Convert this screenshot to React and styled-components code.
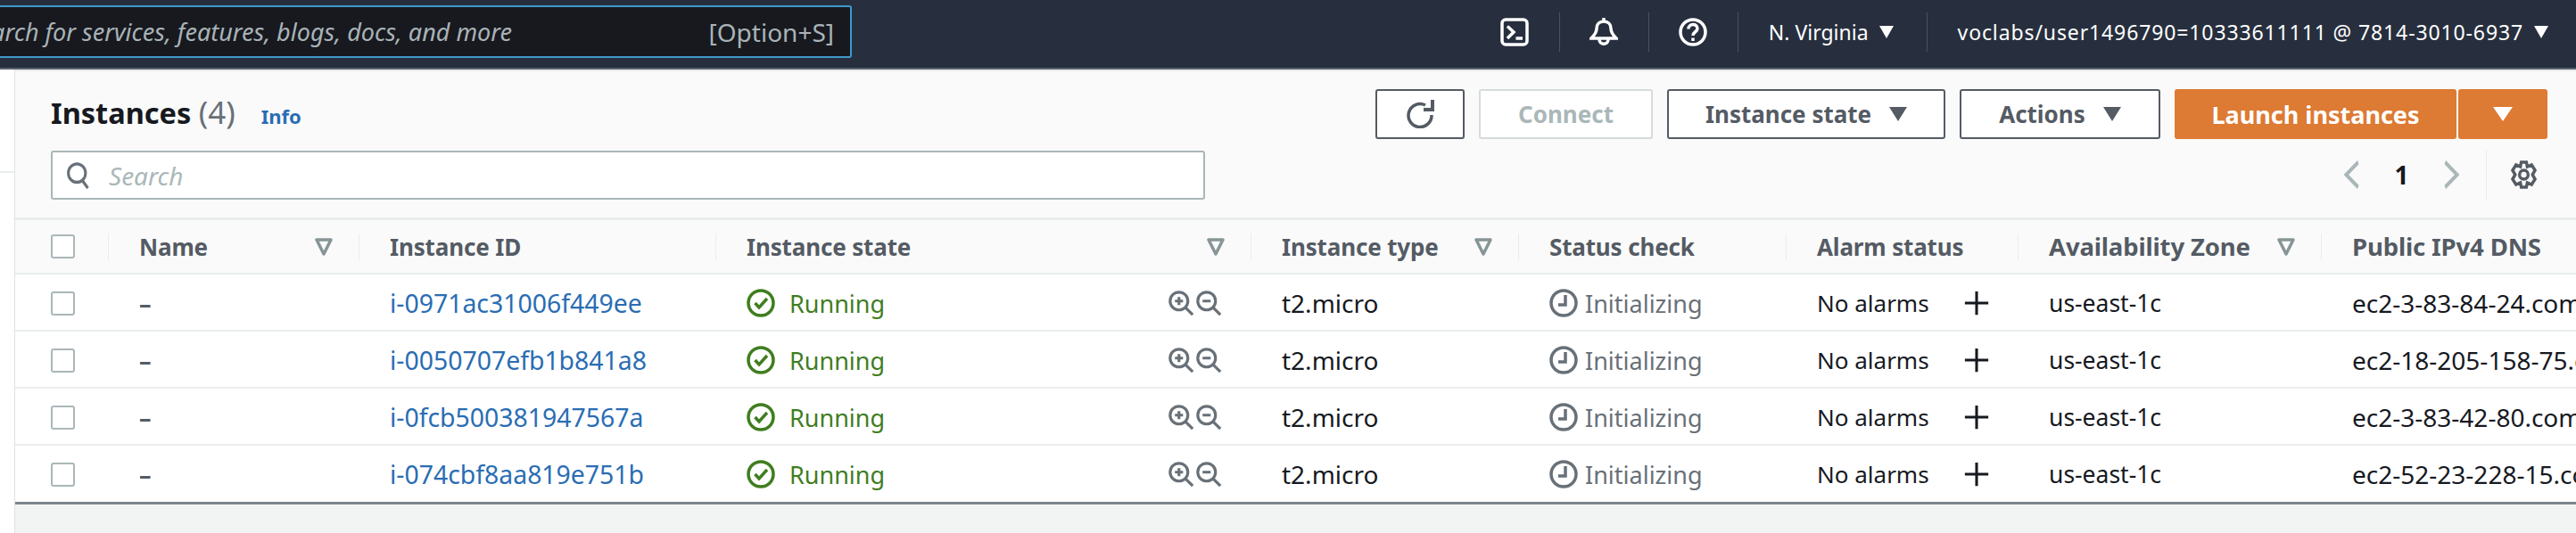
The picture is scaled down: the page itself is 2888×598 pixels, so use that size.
import React from "react";
import styled, { createGlobalStyle } from "styled-components";

const GlobalStyle = createGlobalStyle`
  html, body {
    margin: 0;
    padding: 0;
    background: #f2f3f3;
  }
  body {
    font-family: "Noto Sans", "Open Sans", sans-serif;
    overflow: hidden;
  }
`;

const Page = styled.div`
  width: 2888px;
  height: 598px;
  overflow: hidden;
  display: flex;
  flex-direction: column;
`;

const NavBar = styled.header`
  height: 76px;
  flex: none;
  box-sizing: content-box;
  background: #272f3e;
  border-bottom: 2px solid #5b626d;
  display: flex;
  align-items: center;
  color: #fff;
`;

const NavSearch = styled.div`
  width: 994px;
  height: 59px;
  margin-left: -39px;
  margin-top: -5px;
  box-sizing: border-box;
  border: 2px solid #3f9ac9;
  border-radius: 3px;
  background: #17191f;
  color: #a9b3b7;
  display: flex;
  align-items: center;
  justify-content: space-between;
  padding: 0 18px 0 0;
  overflow: hidden;
  white-space: nowrap;
`;

const NavHint = styled.span`
  font-size: 28px;
`;

const NavHintText = styled.em`
  font-size: 27px;
  font-style: italic;
`;

const NavRight = styled.div`
  margin-left: auto;
  display: flex;
  align-items: center;
  height: 44px;
  margin-top: -4px;
  padding-right: 31px;
`;

const NavIcon = styled.div`
  width: 100px;
  height: 44px;
  box-sizing: border-box;
  border-right: 1px solid #4a5361;
  display: flex;
  align-items: center;
  justify-content: center;
`;

const NavMenu = styled.div`
  height: 44px;
  box-sizing: border-box;
  display: flex;
  align-items: center;
  gap: 12px;
  font-size: 23px;
  letter-spacing: ${(p) => p.$track || 0}px;
  padding: 0 ${(p) => p.$right}px 0 ${(p) => p.$left}px;
  border-right: ${(p) => (p.$last ? "none" : "1px solid #4a5361")};
  white-space: nowrap;
`;

const Caret = styled.span`
  display: inline-block;
  width: 0;
  height: 0;
  border-left: ${(p) => p.$w}px solid transparent;
  border-right: ${(p) => p.$w}px solid transparent;
  border-top: ${(p) => p.$h}px solid ${(p) => p.$color || "#fff"};
`;

const Body = styled.div`
  flex: 1;
  display: flex;
  min-height: 0;
`;

const SideStrip = styled.aside`
  width: 16px;
  flex: none;
  background: #fff;
  border-right: 1px solid #dfe2e4;
`;

const SideRule = styled.div`
  height: 2px;
  margin-top: 114px;
  background: #eaeded;
`;

const Main = styled.main`
  flex: 1;
  min-width: 0;
  display: flex;
  flex-direction: column;
`;

const Toolbar = styled.section`
  height: 169px;
  flex: none;
  box-sizing: border-box;
  background: #fafafa;
  border-top: 2px solid #eaeded;
  border-bottom: 3px solid #eaeded;
  padding: 20px 32px 0 40px;
`;

const TitleRow = styled.div`
  display: flex;
  align-items: flex-start;
  justify-content: space-between;
  height: 69px;
`;

const Heading = styled.div`
  display: flex;
  align-items: baseline;
  gap: 29px;
  padding-top: 2px;
`;

const Title = styled.h1`
  margin: 0;
  font-size: 32.5px;
  font-weight: 700;
  color: #16191f;
`;

const Count = styled.span`
  font-size: 35px;
  font-weight: 400;
  color: #687078;
`;

const InfoLink = styled.a`
  font-size: 22px;
  font-weight: 700;
  color: #2a6db3;
`;

const Buttons = styled.div`
  display: flex;
  gap: 16px;
`;

const Button = styled.button`
  height: 56px;
  width: ${(p) => p.$w}px;
  box-sizing: border-box;
  border: 2px solid ${(p) => (p.$disabled ? "#d5dbdb" : "#545b64")};
  border-radius: 3px;
  background: #fff;
  color: ${(p) => (p.$disabled ? "#aab7b8" : "#545b64")};
  font: 700 26px "Noto Sans", sans-serif;
  display: flex;
  align-items: center;
  justify-content: center;
  gap: 20px;
  padding: 0;
`;

const SplitButton = styled.div`
  display: flex;
  gap: 2px;
`;

const PrimaryButton = styled(Button)`
  border: none;
  background: #dd7a33;
  color: #fff;
  font-size: 27px;
`;

const SearchRow = styled.div`
  display: flex;
  align-items: flex-start;
  justify-content: space-between;
`;

const SearchBox = styled.div`
  width: 1294px;
  height: 55px;
  box-sizing: border-box;
  border: 2px solid #aab7b8;
  border-radius: 3px;
  background: #fff;
  display: flex;
  align-items: center;
  gap: 20px;
  padding-left: 15px;
  color: #aab7b8;
  font-size: 28px;
  font-style: italic;
`;

const Pager = styled.div`
  display: flex;
  align-items: center;
  height: 56px;
  margin-top: -1px;
  padding-right: 11px;
`;

const PageNumber = styled.span`
  width: 93px;
  text-align: center;
  font-size: 28px;
  font-weight: 700;
  color: #16191f;
`;

const PagerRule = styled.div`
  width: 1px;
  height: 56px;
  background: #eaeded;
  margin: 0 26px 0 30px;
`;

const COLUMNS = "105px 281px 400px 600px 300px 300px 260px 340px 300px";

const HeaderRow = styled.div`
  display: grid;
  grid-template-columns: ${COLUMNS};
  height: 61px;
  flex: none;
  box-sizing: border-box;
  background: #fafafa;
  border-bottom: 2px solid #eaeded;
  align-items: center;
`;

const HeadCell = styled.div`
  height: 30px;
  box-sizing: border-box;
  border-right: 1px solid #eaeded;
  display: flex;
  align-items: center;
  justify-content: space-between;
  padding: 0 29px 0 34px;
  font-size: ${(p) => p.$size || 26}px;
  font-weight: 700;
  letter-spacing: -0.15px;
  color: #545b64;
  white-space: nowrap;
`;

const CheckHead = styled(HeadCell)`
  padding-left: 40px;
`;

const Row = styled.div`
  display: grid;
  grid-template-columns: ${COLUMNS};
  height: ${(p) => (p.$last ? 66 : 64)}px;
  flex: none;
  box-sizing: border-box;
  background: #fff;
  border-bottom: ${(p) => (p.$last ? "3px solid #7d868c" : "2px solid #eaeded")};
  align-items: ${(p) => (p.$last ? "start" : "center")};
  font-size: 27px;
  color: #16191f;
`;

const Cell = styled.div`
  height: 62px;
  box-sizing: border-box;
  display: flex;
  align-items: center;
  justify-content: ${(p) => (p.$spread ? "space-between" : "flex-start")};
  gap: ${(p) => p.$gap || 0}px;
  padding: 2px 33px 0 ${(p) => (p.$check ? 40 : 34)}px;
  font-size: ${(p) => (p.$size ? `${p.$size}px` : "inherit")};
  white-space: nowrap;
  overflow: hidden;
  min-width: 0;
`;

const Check = styled.span`
  display: block;
  width: 27px;
  height: 27px;
  box-sizing: border-box;
  border: 2px solid #aab7b8;
  border-radius: 3px;
  background: #fff;
`;

const Dash = styled.span`
  color: #545b64;
  font-weight: 700;
`;

const Link = styled.a`
  color: #2a6db3;
  font-size: 28.4px;
`;

const Running = styled.span`
  color: #3f7d1f;
`;

const Pending = styled.span`
  color: #687078;
`;

const Group = styled.span`
  display: flex;
  align-items: center;
  gap: ${(p) => p.$gap}px;
`;

const Footer = styled.div`
  flex: 1;
  background: #f2f3f3;
`;

const Icon = ({ size = 32, w, h, color = "currentColor", sw = 3.5, children }) => (
  <svg
    width={w || size}
    height={h || size}
    viewBox="0 0 32 32"
    fill="none"
    stroke={color}
    strokeWidth={sw}
    preserveAspectRatio="none"
    style={{ display: "block", flex: "none" }}
  >
    {children}
  </svg>
);

const FilterIcon = () => (
  <svg width="20" height="22" viewBox="0 0 20 22" style={{ display: "block", flex: "none" }}>
    <path d="M2 3 H18 L10 19 Z" fill="none" stroke="#879596" strokeWidth="3.5" strokeLinejoin="round" />
  </svg>
);

const CheckCircle = () => (
  <Icon color="#3f7d1f">
    <circle cx="16" cy="16" r="14" />
    <path d="M9.5 16 L14 21 L23 11" />
  </Icon>
);

const Clock = () => (
  <Icon color="#687078">
    <circle cx="16" cy="16" r="14" />
    <path d="M18 7 V18 H10" />
  </Icon>
);

const ZoomIn = () => (
  <Icon size={29} color="#687078">
    <circle cx="13" cy="13" r="11" />
    <path d="M21 21 L30 30 M13 8 V18 M8 13 H18" />
  </Icon>
);

const ZoomOut = () => (
  <Icon size={29} color="#687078">
    <circle cx="13" cy="13" r="11" />
    <path d="M21 21 L30 30 M8 13 H18" />
  </Icon>
);

const Plus = () => (
  <Icon size={28} color="#16191f">
    <path d="M16 1 V31 M1 16 H31" />
  </Icon>
);

const rows = [
  { id: "i-0971ac31006f449ee", dns: "ec2-3-83-84-24.compute-1.amazonaws.com" },
  { id: "i-0050707efb1b841a8", dns: "ec2-18-205-158-75.compute-1.amazonaws.com" },
  { id: "i-0fcb500381947567a", dns: "ec2-3-83-42-80.compute-1.amazonaws.com" },
  { id: "i-074cbf8aa819e751b", dns: "ec2-52-23-228-15.compute-1.amazonaws.com" },
];

const headers = [
  { label: "Name", filter: true },
  { label: "Instance ID" },
  { label: "Instance state", filter: true },
  { label: "Instance type", filter: true },
  { label: "Status check" },
  { label: "Alarm status" },
  { label: "Availability Zone", filter: true, size: 27.5 },
  { label: "Public IPv4 DNS", size: 27.5 },
];

export default function App() {
  return (
    <Page>
      <GlobalStyle />
      <NavBar>
        <NavSearch>
          <NavHintText>Search for services, features, blogs, docs, and more</NavHintText>
          <NavHint>[Option+S]</NavHint>
        </NavSearch>
        <NavRight>
          <NavIcon>
            <Icon color="#fff">
              <rect x="2" y="2" width="28" height="28" rx="4" />
              <path d="M8 9.5 L15 16 L8 23 M17.5 23 H25" />
            </Icon>
          </NavIcon>
          <NavIcon>
            <Icon color="#fff">
              <path d="M16 0 V4 M2 23 C6 19 8 16 8 12 C8 7 11 4 16 4 C21 4 24 7 24 12 C24 16 26 19 30 23 Z M11 24 C11 31 21 31 21 24" />
            </Icon>
          </NavIcon>
          <NavIcon>
            <Icon color="#fff">
              <circle cx="16" cy="16" r="14" />
              <path d="M11 12.5 C11 6 21 6 21 12 C21 16 16 15.5 16 20 M16 22.5 V26" />
            </Icon>
          </NavIcon>
          <NavMenu $left={34} $right={37}>
            N. Virginia
            <Caret $w={8} $h={14} />
          </NavMenu>
          <NavMenu $left={34} $right={0} $track={0.88} $last>
            voclabs/user1496790=10333611111 @ 7814-3010-6937
            <Caret $w={8} $h={14} />
          </NavMenu>
        </NavRight>
      </NavBar>
      <Body>
        <SideStrip>
          <SideRule />
        </SideStrip>
        <Main>
          <Toolbar>
            <TitleRow>
              <Heading>
                <Title>
                  Instances <Count>(4)</Count>
                </Title>
                <InfoLink>Info</InfoLink>
              </Heading>
              <Buttons>
                <Button $w={100} aria-label="Refresh">
                  <Icon color="#545b64">
                    <path d="M22 6 A13 13 0 1 0 29 17" />
                    <path d="M28 0 H32 V13 H20 V9 H28 Z" fill="#545b64" stroke="none" />
                  </Icon>
                </Button>
                <Button $w={195} $disabled>Connect</Button>
                <Button $w={312}>
                  Instance state
                  <Caret $w={10} $h={16} $color="#545b64" />
                </Button>
                <Button $w={225}>
                  Actions
                  <Caret $w={10} $h={16} $color="#545b64" />
                </Button>
                <SplitButton>
                  <PrimaryButton $w={316}>Launch instances</PrimaryButton>
                  <PrimaryButton $w={100}>
                    <Caret $w={11} $h={16} />
                  </PrimaryButton>
                </SplitButton>
              </Buttons>
            </TitleRow>
            <SearchRow>
              <SearchBox>
                <Icon w={28} h={30} color="#687078">
                  <circle cx="14" cy="13" r="11" />
                  <path d="M21 22 L28 31" />
                </Icon>
                Search
              </SearchBox>
              <Pager>
                <Icon w={18} h={32} color="#aab7b8" sw={5}>
                  <path d="M28 2 L4 16 L28 30" />
                </Icon>
                <PageNumber>1</PageNumber>
                <Icon w={18} h={32} color="#aab7b8" sw={5}>
                  <path d="M4 2 L28 16 L4 30" />
                </Icon>
                <PagerRule />
                <Icon w={31} h={32} color="#545b64">
                  <circle cx="16" cy="16" r="5" />
                  <path d="M13 2 H19 L20 7 L25 5 L29 11 L26 16 L29 21 L25 27 L20 25 L19 30 H13 L12 25 L7 27 L3 21 L6 16 L3 11 L7 5 L12 7 Z" />
                </Icon>
              </Pager>
            </SearchRow>
          </Toolbar>
          <HeaderRow>
            <CheckHead>
              <Check />
            </CheckHead>
            {headers.map(({ label, filter, size }) => (
              <HeadCell key={label} $size={size}>
                {label}
                {filter && <FilterIcon />}
              </HeadCell>
            ))}
          </HeaderRow>
          {rows.map((row, i) => (
            <Row key={row.id} $last={i === rows.length - 1}>
              <Cell $check>
                <Check />
              </Cell>
              <Cell>
                <Dash>–</Dash>
              </Cell>
              <Cell>
                <Link>{row.id}</Link>
              </Cell>
              <Cell $spread>
                <Group $gap={16}>
                  <CheckCircle />
                  <Running>Running</Running>
                </Group>
                <Group $gap={2}>
                  <ZoomIn />
                  <ZoomOut />
                </Group>
              </Cell>
              <Cell $size={28}>t2.micro</Cell>
              <Cell $gap={8}>
                <Clock />
                <Pending>Initializing</Pending>
              </Cell>
              <Cell $spread $size={26}>
                No alarms
                <Plus />
              </Cell>
              <Cell $size={26.5}>us-east-1c</Cell>
              <Cell $size={28}>{row.dns}</Cell>
            </Row>
          ))}
          <Footer />
        </Main>
      </Body>
    </Page>
  );
}
